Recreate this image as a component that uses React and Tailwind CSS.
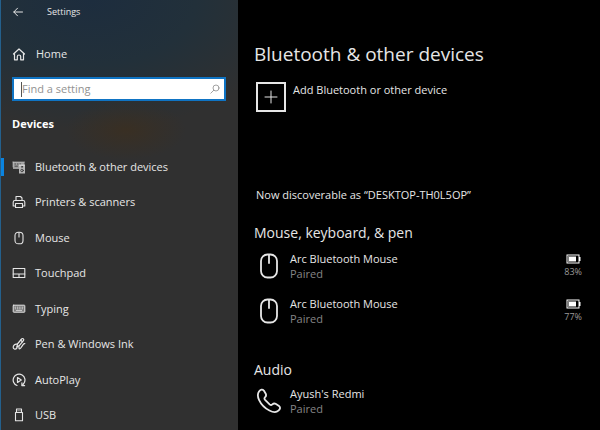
import React, { useState } from 'react';

const Svg = ({ className = 'h-[14px] w-[14px]', children, ...rest }) => (
  <svg
    viewBox="0 0 14 14"
    fill="none"
    stroke="currentColor"
    strokeWidth="1"
    strokeLinejoin="round"
    strokeLinecap="round"
    aria-hidden="true"
    className={`shrink-0 ${className}`}
    {...rest}
  >
    {children}
  </svg>
);

const BackIcon = () => (
  <Svg className="h-[10px] w-[10px]" viewBox="0 0 10 10">
    <path d="M9.5 5H.8M4.5 1.2.8 5l3.7 3.8" />
  </Svg>
);

const HomeIcon = () => (
  <Svg strokeWidth="1.2">
    <path d="M1.5 7 7 2l5.5 5" />
    <path d="M2.5 6.5v6.3h2.8V9.5c0-2 3.400-2 3.400 0v3.300h2.800V6.500" />
  </Svg>
);

const SearchIcon = () => (
  <Svg className="h-[10px] w-[10px]" viewBox="0 0 10 10" strokeWidth="0.8">
    <circle cx="6" cy="4" r="3" />
    <path d="M3.8 6.2.8 9.2" />
  </Svg>
);

const DevicesIcon = () => (
  <Svg>
    <path d="M1 2h11.500v4H7v3H1z" fill="currentColor" fillOpacity="0.6" stroke="none" />
    <path d="M1 2h11.500M1 2v5" strokeOpacity="0.5" />
    <path d="M3 4h.5M5.500 4H6M8 4h.5M3 6.200h2.500" stroke="#303030" strokeWidth="0.8" />
    <rect x="7" y="4.500" width="6" height="9" fill="currentColor" fillOpacity="0.75" stroke="none" />
    <circle cx="10" cy="6.800" r="0.6" stroke="#303030" strokeWidth="0.8" />
    <circle cx="10" cy="10.500" r="1.300" stroke="#303030" strokeWidth="0.8" />
  </Svg>
);

const PrinterIcon = () => (
  <Svg strokeWidth="1.1">
    <path d="M4 5.5v-4h4.5L10 3v2.5" />
    <path d="M3.5 11H1.2V7.2c0-1 .6-1.7 1.6-1.7h8.4c1 0 1.6.7 1.6 1.7V11h-2.3" />
    <rect x="3.5" y="8.5" width="7" height="4" />
  </Svg>
);

const MouseIcon = () => (
  <Svg strokeWidth="1.1">
    <rect x="3" y="1.2" width="8" height="11.6" rx="3.4" />
    <path d="M7 1.5V6" />
  </Svg>
);

const TouchpadIcon = () => (
  <Svg strokeWidth="1.1">
    <rect x="1.2" y="2.5" width="11.6" height="9" />
    <path d="M1.2 8h11.6M7 8v3.5" />
  </Svg>
);

const KeyboardIcon = () => (
  <Svg>
    <rect x="1.2" y="3.2" width="11.6" height="7" rx="0.5" fill="currentColor" fillOpacity="0.4" />
    <path d="M3 5.2h.6M5.3 5.2h.6M7.6 5.2h.6M10 5.2h.8M3.2 6.8h.4M5.3 6.8h.6M7.6 6.8h.6M10 6.8h.6M4.3 8.4h5.4" strokeWidth="0.8" />
  </Svg>
);

const PenIcon = () => (
  <Svg strokeWidth="1.2">
    <path d="M5 10 5.400 7l4.200-5c.5-.6 1.300-.7 1.800-.2s.5 1.200 0 1.800L7.300 8.600z" />
    <path d="m8.700 3.200 1.800 1.500" />
    <path d="M4.800 7.200C2.700 7 1.200 8.400 1.200 10.200s2 2.500 3.500 1.300l.4-2" />
    <path d="M7 9.500v1.800c.3.900 1.300.5 2-.6l2.300-3.400c.6-.8 1.500-.6 1.500-.6" />
  </Svg>
);

const AutoPlayIcon = () => (
  <Svg strokeWidth="1.2">
    <path d="M5 12.500A5.900 5.900 0 1 1 11.800 10.500L10.300 12.300" />
    <path d="M9.900 9.900v2.700h2.700" />
    <path d="M5.500 4.600v4.800L9.300 7z" />
  </Svg>
);

const UsbIcon = () => (
  <Svg strokeWidth="1.1">
    <path d="M4.500 4.500V1h5v3.500" />
    <path d="M3.500 4.500h7v8.300h-7z" />
    <path d="M6 2.800h.2M7.900 2.800h.2" />
  </Svg>
);

const BigMouseIcon = () => (
  <Svg className="h-[26px] w-[26px]" viewBox="0 0 26 26" strokeWidth="1.800">
    <rect x="5" y="1.500" width="16" height="23" rx="6.500" />
    <path d="M13 2v8" />
  </Svg>
);

const PhoneIcon = () => (
  <Svg className="h-[26px] w-[26px]" viewBox="0 0 26 26" strokeWidth="1.800">
    <path d="M3 3.400C4.500 1.300 6.500 1 7.800 2.500L9.600 5.500c.9 1.600.5 2.700-.5 3.700-1 .9-.8 1.700 0 2.700l4.500 4.400c1 .9 1.800 1 2.700.1 1.100-1 2.300-1.200 3.700-.4l3 2c1.700 1.300 1.200 3.100-.6 4.700-2 1.900-5.200 1.800-9-.2C9 20.200 5.200 16.500 3 11.800 1.500 8.500 1.600 5.500 3 3.400z" />
  </Svg>
);

const BatteryIcon = () => (
  <Svg className="h-[10px] w-[15px]" viewBox="0 0 15 10" strokeLinejoin="miter">
    <rect x="1" y="1" width="12" height="8" />
    <rect x="2" y="2" width="8" height="6" fill="currentColor" fillOpacity="0.5" stroke="none" />
    <rect x="3" y="3" width="7" height="4" fill="currentColor" stroke="none" />
    <rect x="13" y="3" width="1.500" height="4" fill="currentColor" stroke="none" />
  </Svg>
);

const navItems = [
  { label: 'Bluetooth & other devices', Icon: DevicesIcon },
  { label: 'Printers & scanners', Icon: PrinterIcon },
  { label: 'Mouse', Icon: MouseIcon },
  { label: 'Touchpad', Icon: TouchpadIcon },
  { label: 'Typing', Icon: KeyboardIcon },
  { label: 'Pen & Windows Ink', Icon: PenIcon },
  { label: 'AutoPlay', Icon: AutoPlayIcon },
  { label: 'USB', Icon: UsbIcon },
];

const mice = [
  { name: 'Arc Bluetooth Mouse', battery: 83 },
  { name: 'Arc Bluetooth Mouse', battery: 77 },
];

const Device = ({ name, battery, icon }) => (
  <li className="flex items-center gap-2">
    {icon}
    <div className="flex-1 leading-[15px]">
      <p>{name}</p>
      <p className="text-[#858585]">Paired</p>
    </div>
    {battery && (
      <div className="flex flex-col items-center gap-0.5 text-[9px] leading-3 text-[#999]">
        <span className="text-white"><BatteryIcon /></span>
        {battery}%
      </div>
    )}
  </li>
);

const App = () => {
  const [active, setActive] = useState(navItems[0].label);
  const [query, setQuery] = useState('');

  return (
    <div className="flex h-screen overflow-hidden bg-black font-['Open_Sans','Noto_Sans',sans-serif] text-[11px] text-[#e6e6e6]">
      {/* Sidebar */}
      <aside className="w-[238px] shrink-0 border-l border-[#24608c] bg-[#303030] bg-[radial-gradient(ellipse_60px_30px_at_125px_130px,#392f23,transparent),radial-gradient(ellipse_210px_130px_at_90px_0px,#1d2d3e,#22303a_50%,transparent)]">
        <header className="flex h-6 items-center gap-6 pl-3 text-[9px]">
          <button type="button" aria-label="Back"><BackIcon /></button>
          <span>Settings</span>
        </header>

        <a href="#home" className="mt-[18px] flex h-6 items-center gap-[10px] pl-[11px]">
          <HomeIcon />
          Home
        </a>

        <label className="mt-[11px] mr-3 ml-[11px] flex h-6 items-center border-2 border-[#0f74c4] bg-white pr-1 pl-[7px] text-[#8c8c8c]">
          <span className="h-[15px] w-px bg-[#555]" />
          <input
            type="text"
            aria-label="Find a setting"
            placeholder="Find a setting"
            value={query}
            onChange={(e) => setQuery(e.target.value)}
            className="min-w-0 flex-1 text-black outline-none placeholder:text-[#929292]"
          />
          <SearchIcon />
        </label>

        <h2 className="mt-[13px] pl-[11px] font-bold leading-5 text-white">Devices</h2>

        <nav className="mt-[15px]">
          <ul className="grid h-[284px] auto-rows-fr">
            {navItems.map(({ label, Icon }) => (
              <li key={label} className="flex items-center">
                <span className={`h-[18px] w-[3px] ${active === label ? 'bg-[#0a84e0]' : ''}`} />
                <button
                  type="button"
                  onClick={() => setActive(label)}
                  className="flex flex-1 items-center gap-[9px] pl-2 text-left"
                >
                  <Icon />
                  {label}
                </button>
              </li>
            ))}
          </ul>
        </nav>
      </aside>

      {/* Content */}
      <main className="min-w-0 flex-1 pt-10 pr-[18px] pl-4">
        <h1 className="text-[19px] leading-7">Bluetooth &amp; other devices</h1>

        <button type="button" className="mt-[14px] flex gap-[7px] pl-0.5 text-left leading-4">
          <span className="flex h-[30px] w-[30px] items-center justify-center border-2 border-[#e6e6e6]">
            <Svg><path d="M7 1v12M1 7h12" /></Svg>
          </span>
          Add Bluetooth or other device
        </button>

        <p className="mt-[75px] pl-0.5 leading-4">Now discoverable as “DESKTOP-TH0L5OP”</p>

        <section className="mt-[18px]">
          <h2 className="text-sm leading-6">Mouse, keyboard, &amp; pen</h2>
          <ul className="mt-1.5 flex flex-col gap-[15px] pl-0.5">
            {mice.map((m) => (
              <Device key={m.battery} {...m} icon={<BigMouseIcon />} />
            ))}
          </ul>
        </section>

        <section className="mt-8">
          <h2 className="text-sm leading-6">Audio</h2>
          <ul className="mt-1 pl-0.5">
            <Device name="Ayush's Redmi" icon={<PhoneIcon />} />
          </ul>
        </section>
      </main>
    </div>
  );
};

export default App;
